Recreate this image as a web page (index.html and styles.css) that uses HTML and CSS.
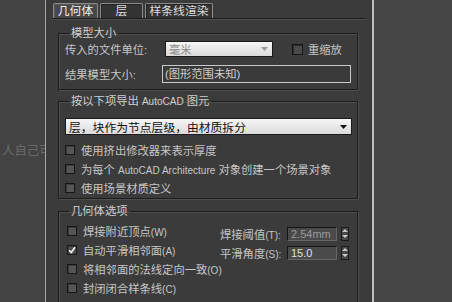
FILE: index.html
```html
<!DOCTYPE html>
<html>
<head>
<meta charset="utf-8">
<link rel="stylesheet" href="styles.css">
</head>
<body>
<div class="screen">
  <div class="side-left"><span class="bg-text">人自己可</span></div>
  <div class="edge"></div>
  <div class="dialog">
    <div class="tabs">
      <div class="tab active t1">几何体</div>
      <div class="tab t2">层</div>
      <div class="tab t3">样条线渲染</div>
    </div>

    <fieldset class="group g1">
      <legend>模型大小</legend>
      <div class="row r1">
        <span class="label l1">传入的文件单位:</span>
        <div class="select s1"><span class="sel-text">毫米</span><svg class="arrow" width="7" height="4" viewBox="0 0 7 4"><path d="M0 0H7L3.5 4Z" fill="#9a9a9a"/></svg></div>
        <div class="check c-top"><span class="box dark"></span><span>重缩放</span></div>
      </div>
      <div class="row r2">
        <span class="label l2">结果模型大小:</span>
        <div class="readout">(图形范围未知)</div>
      </div>
    </fieldset>

    <fieldset class="group g2">
      <legend>按以下项导出 <span class="lat">AutoCAD</span> 图元</legend>
      <div class="select s2"><span class="sel-text">层，块作为节点层级，由材质拆分</span><svg class="arrow" width="7" height="4" viewBox="0 0 7 4"><path d="M0 0H7L3.5 4Z" fill="#111"/></svg></div>
      <div class="checks">
        <div class="check"><span class="box"></span><span>使用挤出修改器来表示厚度</span></div>
        <div class="check"><span class="box"></span><span>为每个 <span class="lat">AutoCAD Architecture</span> 对象创建一个场景对象</span></div>
        <div class="check"><span class="box"></span><span>使用场景材质定义</span></div>
      </div>
    </fieldset>

    <fieldset class="group g3">
      <legend>几何体选项</legend>
      <div class="g3-body">
        <div class="checks c3">
          <div class="check"><span class="box"></span><span>焊接附近顶点<span class="lat">(W)</span></span></div>
          <div class="check"><span class="box checked"><svg width="8" height="8" viewBox="0 0 8 8"><path d="M1 4.2L3.2 6.4L7 1.2" fill="none" stroke="#f2f2f2" stroke-width="1.6"/></svg></span><span>自动平滑相邻面<span class="lat">(A)</span></span></div>
          <div class="check"><span class="box"></span><span>将相邻面的法线定向一致<span class="lat">(O)</span></span></div>
          <div class="check"><span class="box"></span><span>封闭闭合样条线<span class="lat">(C)</span></span></div>
        </div>
        <div class="spins">
          <div class="spin-row">
            <span class="spin-label">焊接阈值<span class="lat">(T):</span></span>
            <div class="num dim">2.54mm</div>
            <div class="spinner"><svg width="6" height="11" viewBox="0 0 6 11"><path d="M0 4L3 1L6 4Z M0 7L3 10L6 7Z" fill="#c8c8c8"/></svg></div>
          </div>
          <div class="spin-row">
            <span class="spin-label">平滑角度<span class="lat">(S):</span></span>
            <div class="num">15.0</div>
            <div class="spinner"><svg width="6" height="11" viewBox="0 0 6 11"><path d="M0 4L3 1L6 4Z M0 7L3 10L6 7Z" fill="#c8c8c8"/></svg></div>
          </div>
        </div>
      </div>
    </fieldset>
  </div>
  <div class="edge right"></div>
  <div class="side-right"></div>
</div>
</body>
</html>
```

FILE: styles.css
```css
* { box-sizing: border-box; }
html, body { margin: 0; padding: 0; }
body {
  background: #444444;
  font-family: "Liberation Sans", "Noto Sans CJK SC", sans-serif;
  font-size: 11.3px;
  color: #c6c6c6;
}
.lat { font-size: 10px; }
.screen {
  display: flex;
  width: 452px;
  height: 302px;
  overflow: hidden;
}
.side-left {
  width: 45px;
  flex: none;
  background: #434343;
  overflow: hidden;
  padding-top: 144px;
  padding-left: 2px;
  white-space: nowrap;
}
.bg-text {
  color: #6a6a6a;
  font-size: 12.4px;
  line-height: 14px;
}
.edge {
  width: 1px;
  flex: none;
  background: #a8a8a8;
}
.edge.right {
  width: 2px;
  background: #bdbdbd;
}
.side-right {
  flex: 1;
  background: #464646;
}
.dialog {
  width: 326px;
  flex: none;
  background: #3b3b3b;
  padding-top: 3px;
}

/* tabs */
.tabs {
  display: flex;
  gap: 2px;
  margin-left: 7px;
  width: 313px;
  height: 16px;
  border-bottom: 1px solid #1c1c1c;
  box-shadow: 0 1px 0 #4e4e4e;
}
.tab {
  height: 15px;
  line-height: 14px;
  text-align: center;
  color: #dcdcdc;
  background: #333333;
  border: 1px solid #8a8a8a;
  border-bottom: none;
  border-radius: 2px 2px 0 0;
  box-shadow: inset 1px 1px 0 #222;
  font-size: 11.8px;
}
.tab.active {
  background: #484848;
  color: #eeeeee;
  box-shadow: inset 1px 1px 0 #5a5a5a;
}
.t1 { width: 45px; }
.t2 { width: 43px; }
.t3 { width: 68px; }

/* group boxes */
.group {
  margin: 7px 0 0 12px;
  width: 300px;
  padding: 1px 6px 6px 6px;
  border: 1px solid #1c1c1c;
  box-shadow: inset 1px 1px 0 #4e4e4e, 1px 1px 0 #4e4e4e;
  min-width: 0;
}
.group legend {
  padding: 0 2px;
  margin-left: 4px;
  line-height: 14px;
  color: #cfcfcf;
}
.g2 { margin-top: 4px; padding-top: 9px; padding-bottom: 1px; }
.g3 { margin-top: 5px; padding-top: 3px; padding-bottom: 12px; padding-right: 8px; }

.row {
  display: flex;
  align-items: center;
  white-space: nowrap;
}
.r1 { height: 16px; }
.r2 { height: 18px; margin-top: 8px; }
.l1 { width: 100px; }
.l2 { width: 98px; }

.select {
  display: flex;
  align-items: center;
  justify-content: space-between;
  height: 16px;
  padding: 0 4px 0 3px;
  border: 1px solid #1a1a1a;
  background: linear-gradient(#f6f6f6, #dadada);
  white-space: nowrap;
}
.s1 { width: 108px; color: #8c8c8c; }
.s2 { width: 287px; height: 17px; color: #111111; font-size: 11.8px; }
.arrow { flex: none; }

.check {
  display: flex;
  align-items: center;
  gap: 6px;
  height: 19px;
  white-space: nowrap;
}
.c-top { height: 16px; margin-left: 19px; gap: 5px; }
.box {
  width: 10px;
  height: 10px;
  flex: none;
  border: 1px solid #161616;
  background: #555555;
  box-shadow: inset 1px 1px 0 #3c3c3c;
  display: flex;
  align-items: center;
  justify-content: center;
}
.box.dark {
  width: 11px;
  height: 11px;
  background: #4a4a4a;
  box-shadow: inset 1px 1px 0 #2c2c2c;
}
.box.checked { background: #4f4f4f; }

.readout {
  width: 191px;
  height: 18px;
  line-height: 16px;
  padding-left: 2px;
  border: 1px solid #c9c9c9;
  background: #3a3a3a;
  color: #cfcfcf;
}

.checks { margin-top: 5px; }
.g3-body { display: flex; }
.c3 { margin-top: 0; padding-left: 2px; width: 155px; }

.spins { padding-top: 3px; }
.spin-row {
  display: flex;
  align-items: center;
  height: 19px;
  white-space: nowrap;
}
.spin-label { width: 67px; }
.num {
  width: 50px;
  height: 14px;
  line-height: 12px;
  padding-left: 3px;
  background: #4a4a4a;
  border: 1px solid;
  border-color: #141414 #666 #666 #141414;
  color: #e0e0e0;
  font-size: 11px;
}
.num.dim { color: #9a9a9a; }
.spinner {
  width: 8px;
  height: 14px;
  margin-left: 4px;
  border: 1px solid #1a1a1a;
  background: #474747;
  display: flex;
  align-items: center;
  justify-content: center;
}
```
